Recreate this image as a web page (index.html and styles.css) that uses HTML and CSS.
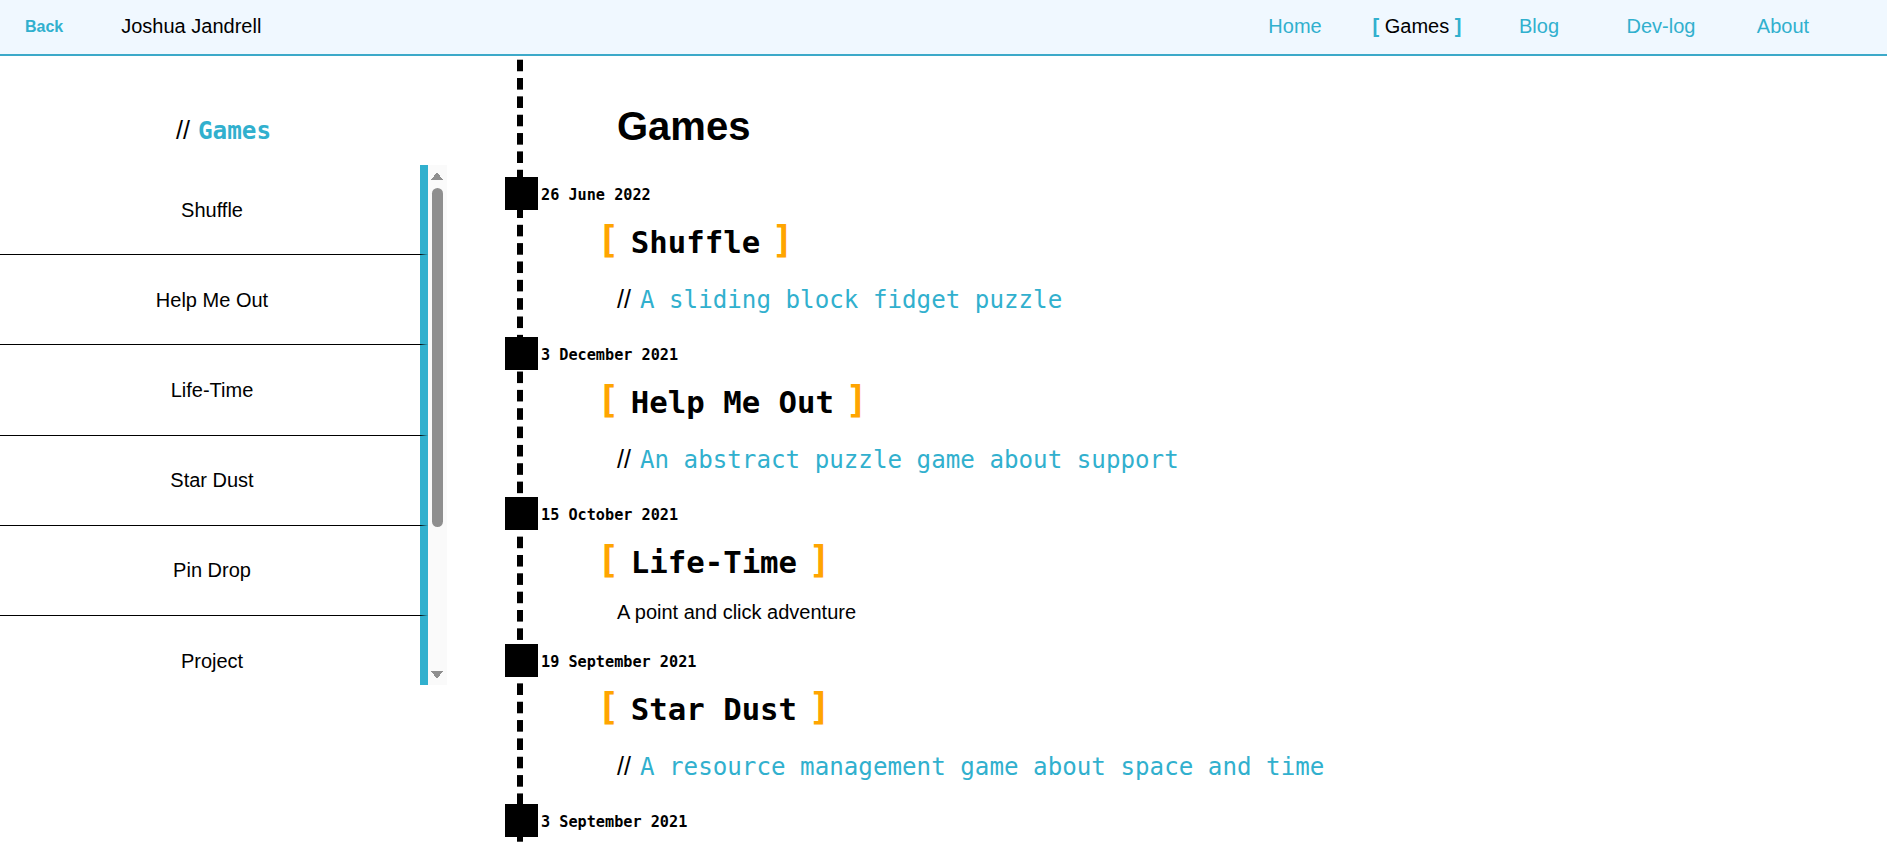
FILE: index.html
```html
<!DOCTYPE html>
<html lang="en">
<head>
<meta charset="utf-8">
<title>Games - Joshua Jandrell</title>
<link rel="stylesheet" href="styles.css">
</head>
<body>
<header class="topbar">
  <a class="back" href="#">Back</a>
  <span class="brand">Joshua Jandrell</span>
  <nav class="nav-links">
    <a href="#">Home</a>
    <a href="#" class="active"><b>[</b> Games <b>]</b></a>
    <a href="#">Blog</a>
    <a href="#">Dev-log</a>
    <a href="#">About</a>
  </nav>
</header>
<div class="page">
  <aside class="sidebar">
    <h2 class="side-title"><span class="slashes">//</span><span class="mono">Games</span></h2>
    <div class="list-box">
      <ul class="game-list">
        <li>Shuffle</li>
        <li>Help Me Out</li>
        <li>Life-Time</li>
        <li>Star Dust</li>
        <li>Pin Drop</li>
        <li>Project</li>
      </ul>
      <div class="scrollbar" aria-hidden="true">
        <span class="scroll-arrow up"></span>
        <span class="scroll-track"><span class="scroll-thumb"></span></span>
        <span class="scroll-arrow down"></span>
      </div>
    </div>
  </aside>
  <main class="timeline">
    <div class="timeline-inner">
      <h1 class="page-title">Games</h1>

      <article class="entry">
        <div class="entry-date"><span class="marker"></span><time>26 June 2022</time></div>
        <h3 class="entry-title"><span class="bracket">[</span><span>Shuffle</span><span class="bracket">]</span></h3>
        <p class="entry-desc"><span class="slashes">//</span><span class="mono">A sliding block fidget puzzle</span></p>
      </article>

      <article class="entry">
        <div class="entry-date"><span class="marker"></span><time>3 December 2021</time></div>
        <h3 class="entry-title"><span class="bracket">[</span><span>Help Me Out</span><span class="bracket">]</span></h3>
        <p class="entry-desc"><span class="slashes">//</span><span class="mono">An abstract puzzle game about support</span></p>
      </article>

      <article class="entry">
        <div class="entry-date"><span class="marker"></span><time>15 October 2021</time></div>
        <h3 class="entry-title"><span class="bracket">[</span><span>Life-Time</span><span class="bracket">]</span></h3>
        <p class="entry-desc plain">A point and click adventure</p>
      </article>

      <article class="entry">
        <div class="entry-date"><span class="marker"></span><time>19 September 2021</time></div>
        <h3 class="entry-title"><span class="bracket">[</span><span>Star Dust</span><span class="bracket">]</span></h3>
        <p class="entry-desc"><span class="slashes">//</span><span class="mono">A resource management game about space and time</span></p>
      </article>

      <article class="entry">
        <div class="entry-date"><span class="marker"></span><time>3 September 2021</time></div>
      </article>
    </div>
  </main>
</div>
</body>
</html>
```

FILE: styles.css
```css
* {
  box-sizing: border-box;
}

html,
body {
  margin: 0;
  height: 100%;
}

body {
  display: flex;
  flex-direction: column;
  overflow: hidden;
  font-family: "Liberation Sans", Arial, sans-serif;
  color: #000;
  background: #fff;
}

/* ---------- top bar ---------- */
.topbar {
  flex: none;
  display: flex;
  align-items: center;
  height: 56px;
  padding-left: 25px;
  background: #f0f8ff;
  border-bottom: 2px solid #3ca9c9;
  line-height: 54px;
}

.back {
  font-size: 16px;
  font-weight: bold;
  color: #31b0ce;
  text-decoration: none;
}

.brand {
  margin-left: 58px;
  margin-bottom: 2px;
  font-size: 20px;
  line-height: 50px;
}

.nav-links {
  display: flex;
  margin-left: auto;
  margin-right: 43px;
  margin-bottom: 2px;
  line-height: 50px;
}

.nav-links a {
  width: 122px;
  text-align: center;
  font-size: 20px;
  color: #31b0ce;
  text-decoration: none;
}

.nav-links a.active {
  color: #000;
}

.nav-links b {
  color: #31b0ce;
}

/* ---------- layout ---------- */
.page {
  flex: 1;
  display: flex;
  min-height: 0;
}

/* ---------- sidebar ---------- */
.sidebar {
  flex: none;
  width: 447px;
}

.side-title {
  display: flex;
  justify-content: center;
  align-items: baseline;
  gap: 8px;
  margin: 59px 0 19px;
  line-height: 30px;
  font-weight: normal;
}

.slashes {
  font-family: "Liberation Sans", Arial, sans-serif;
  font-size: 25px;
  color: #000;
}

.mono {
  font-family: "DejaVu Sans Mono", monospace;
}

.side-title .mono {
  font-size: 24.3px;
  font-weight: bold;
  color: #31b0ce;
}

.list-box {
  display: flex;
  height: 520px;
}

.game-list {
  flex: none;
  width: 428px;
  list-style: none;
  margin: 0;
  padding: 0;
  overflow: hidden;
}

.game-list li {
  padding: 33.6px 0 33.6px 4px;
  border-right: 8px solid #31b0ce;
  border-bottom: 1px solid #000;
  text-align: center;
  font-size: 20px;
  line-height: 22px;
}

.scrollbar {
  flex: none;
  display: flex;
  flex-direction: column;
  width: 19px;
  background: #fafafa;
}

.scroll-arrow {
  flex: none;
  height: 19px;
  background-repeat: no-repeat;
  background-size: 6px 8px;
}

.scroll-arrow.up {
  background-image:
    linear-gradient(to bottom right, transparent 50%, #8f8f8f 50%),
    linear-gradient(to bottom left, transparent 50%, #8f8f8f 50%);
  background-position: 3px 7px, 9px 7px;
}

.scroll-arrow.down {
  background-image:
    linear-gradient(to top right, transparent 50%, #8f8f8f 50%),
    linear-gradient(to top left, transparent 50%, #8f8f8f 50%);
  background-position: 3px 5px, 9px 5px;
}

.scroll-track {
  flex: 1;
  padding: 4px;
}

.scroll-thumb {
  display: block;
  height: 339px;
  border-radius: 6px;
  background: #8f8f8f;
}

/* ---------- timeline ---------- */
.timeline {
  flex: 1;
  min-width: 0;
  overflow: hidden;
}

.timeline-inner {
  display: flow-root;
  min-height: 100%;
  padding: 0 0 40px 58px;
  background: linear-gradient(#000 0 11.7px, transparent 11.7px) 70px 3.7px / 6px 18.35px repeat-y;
}

.page-title {
  margin: 47.5px 0 28.5px 112px;
  font-size: 40px;
  line-height: 45px;
  font-weight: bold;
}

.entry-date {
  display: flex;
  align-items: flex-start;
  height: 33px;
}

.marker {
  flex: none;
  width: 33px;
  height: 33px;
  background: #000;
}

.entry-date time {
  margin-left: 3px;
  padding-top: 2px;
  font-family: "DejaVu Sans Mono", monospace;
  font-size: 15.2px;
  font-weight: bold;
  line-height: 33px;
}

.entry-title {
  display: flex;
  align-items: baseline;
  gap: 11.5px;
  margin: 11.2px 0 0 92px;
  font-family: "DejaVu Sans Mono", monospace;
  font-size: 30.7px;
  font-weight: bold;
  line-height: 40px;
}

.bracket {
  font-size: 37px;
  color: #ffa500;
}

.entry-desc {
  display: flex;
  align-items: baseline;
  gap: 9px;
  margin: 22px 0 22.9px 112px;
  line-height: 28px;
}

.entry-desc .mono {
  font-size: 24.2px;
  color: #31b0ce;
}

.entry-desc.plain {
  display: block;
  margin: 14.2px 0 18.1px 112px;
  font-size: 20px;
}
```
